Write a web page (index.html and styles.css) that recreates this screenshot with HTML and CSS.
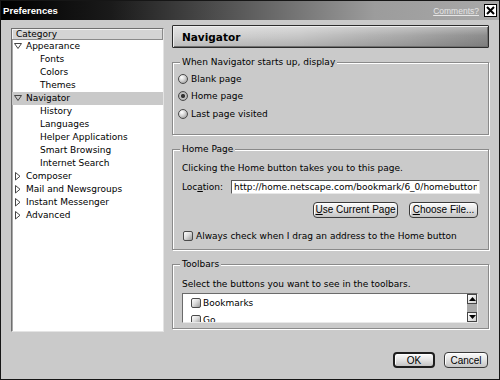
FILE: index.html
```html
<!DOCTYPE html>
<html>
<head>
<meta charset="utf-8">
<title>Preferences</title>
<link rel="stylesheet" href="styles.css">
</head>
<body>
<div class="window">
  <div class="titlebar">
    <span class="title">Preferences</span>
    <span class="comments">Comments?</span>
    <span class="close"><svg width="9" height="9" viewBox="0 0 9 9"><path d="M1 1 L8 8 M8 1 L1 8" stroke="#000" stroke-width="2"/></svg></span>
  </div>
  <div class="main">
    <div class="tree">
      <div class="tree-head">Category</div>
      <div class="row"><svg class="tri" width="9" height="7" viewBox="0 0 9 7"><path d="M0.5 0.5 H7.5 L4 5.5 Z" fill="none" stroke="#444"/></svg>Appearance</div>
      <div class="row child">Fonts</div>
      <div class="row child">Colors</div>
      <div class="row child">Themes</div>
      <div class="row selected"><svg class="tri" width="9" height="7" viewBox="0 0 9 7"><path d="M0.5 0.5 H7.5 L4 5.5 Z" fill="none" stroke="#444"/></svg>Navigator</div>
      <div class="row child">History</div>
      <div class="row child">Languages</div>
      <div class="row child">Helper Applications</div>
      <div class="row child">Smart Browsing</div>
      <div class="row child">Internet Search</div>
      <div class="row"><svg class="tri" width="9" height="9" viewBox="0 0 9 9"><path d="M1.5 0.5 V8 L6 4.25 Z" fill="none" stroke="#444"/></svg>Composer</div>
      <div class="row"><svg class="tri" width="9" height="9" viewBox="0 0 9 9"><path d="M1.5 0.5 V8 L6 4.25 Z" fill="none" stroke="#444"/></svg>Mail and Newsgroups</div>
      <div class="row"><svg class="tri" width="9" height="9" viewBox="0 0 9 9"><path d="M1.5 0.5 V8 L6 4.25 Z" fill="none" stroke="#444"/></svg>Instant Messenger</div>
      <div class="row"><svg class="tri" width="9" height="9" viewBox="0 0 9 9"><path d="M1.5 0.5 V8 L6 4.25 Z" fill="none" stroke="#444"/></svg>Advanced</div>
    </div>
    <div class="panel">
      <div class="panel-head">Navigator</div>
      <fieldset class="group g-start">
        <legend>When Navigator starts up, display</legend>
        <div class="opt"><span class="radio"></span>Blank page</div>
        <div class="opt"><span class="radio on"></span>Home page</div>
        <div class="opt"><span class="radio"></span>Last page visited</div>
      </fieldset>
      <fieldset class="group g-home">
        <legend>Home Page</legend>
        <div class="line">Clicking the Home button takes you to this page.</div>
        <div class="loc">
          <span class="loc-label">Loc<u>a</u>tion:</span>
          <input class="loc-input" type="text" value="http://home.netscape.com/bookmark/6_0/homebutton.html">
        </div>
        <div class="btnrow">
          <button class="btn w-use"><u>U</u>se Current Page</button>
          <button class="btn w-choose"><u>C</u>hoose File...</button>
        </div>
        <div class="check-row"><span class="check"></span>Always check when I drag an address to the Home button</div>
      </fieldset>
      <fieldset class="group g-tool">
        <legend>Toolbars</legend>
        <div class="line">Select the buttons you want to see in the toolbars.</div>
        <div class="listbox">
          <div class="items">
            <div class="item"><span class="check"></span>Bookmarks</div>
            <div class="item"><span class="check"></span>Go</div>
          </div>
          <div class="scroll">
            <div class="sbtn"><svg width="7" height="4" viewBox="0 0 7 4"><path d="M0 4 L3.5 0 L7 4 Z" fill="#000"/></svg></div>
            <div class="thumb"></div>
            <div class="sbtn"><svg width="7" height="4" viewBox="0 0 7 4"><path d="M0 0 L3.5 4 L7 0 Z" fill="#000"/></svg></div>
          </div>
        </div>
      </fieldset>
    </div>
  </div>
  <div class="footer">
    <button class="btn default w-ok">OK</button>
    <button class="btn w-cancel">Cancel</button>
  </div>
</div>
</body>
</html>
```

FILE: styles.css
```css
* { box-sizing: border-box; }
html, body { margin: 0; padding: 0; }
body {
  width: 500px;
  height: 380px;
  background: #cacaca;
  font-family: "DejaVu Sans", Verdana, sans-serif;
  font-size: 9px;
  color: #000;
  overflow: hidden;
}
.window {
  width: 500px;
  height: 380px;
  border: 1px solid #161616;
  background: #cacaca;
  display: flex;
  flex-direction: column;
}
.titlebar {
  flex: none;
  height: 19px;
  display: flex;
  align-items: center;
  padding: 0 2px 0 2px;
  background: linear-gradient(to right, #000 0%, #1a1a1a 22%, #5e5e5e 50%, #9c9c9c 75%, #a8a8a8 100%);
}
.title {
  flex: 1;
  font-family: "Liberation Sans", Arial, sans-serif;
  font-weight: bold;
  font-size: 9.6px;
  color: #fff;
}
.comments {
  font-family: "Liberation Sans", Arial, sans-serif;
  font-size: 8.5px;
  color: #e6e6e6;
  text-decoration: underline;
  margin-right: 5px;
}
.close {
  width: 13px;
  height: 13px;
  background: #fff;
  border: 1px solid #000;
  display: flex;
  align-items: center;
  justify-content: center;
}

.main {
  flex: none;
  height: 312px;
  display: flex;
  align-items: flex-start;
  gap: 8px;
  padding: 5px 10px 0 10px;
}
.tree {
  flex: none;
  width: 153px;
  height: 304px;
  margin-top: 3px;
  background: #fff;
  border-top: 1px solid #6f6f6f;
  border-left: 1px solid #6f6f6f;
  border-right: 1px solid #e4e4e4;
  border-bottom: 1px solid #e4e4e4;
  box-shadow: inset 1px 0 0 #a8a8a8;
}
.tree-head {
  height: 11px;
  line-height: 11px;
  padding-left: 4px;
  background: #d4d4d4;
  border-bottom: 1px solid #8a8a8a;
  border-right: 1px solid #8a8a8a;
  box-shadow: inset 1px 1px 0 #f2f2f2;
}
.row {
  height: 13px;
  line-height: 13px;
  display: flex;
  align-items: center;
  padding-left: 2px;
  white-space: nowrap;
}
.row.child { padding-left: 28px; }
.row.selected { background: #c9c9c9; }
.tri { flex: none; margin-right: 3px; }

.panel {
  flex: none;
  width: 317px;
  display: flex;
  flex-direction: column;
}
.panel-head {
  height: 23px;
  display: flex;
  align-items: center;
  padding-left: 9px;
  font-weight: bold;
  font-size: 10.5px;
  border: 1px solid #2c2c2c;
  border-radius: 1px;
  background:
    linear-gradient(to bottom, rgba(255,255,255,0.35) 0%, rgba(255,255,255,0) 45%, rgba(0,0,0,0.12) 100%),
    linear-gradient(to right, #d6d6d6 0%, #c8c8c8 40%, #a8a8a8 75%, #8c8c8c 100%);
  box-shadow: inset 1px 1px 0 #eeeeee, inset -1px -1px 0 #707070;
}

.group {
  margin: 9px 0 0 0;
  border: 1px solid #8a8a8a;
  box-shadow: inset 1px 1px 0 #fff, 1px 1px 0 #fff;
  min-width: 0;
}
.group legend {
  font-size: 9px;
  line-height: 11px;
  padding: 0 2px;
  background: #cacaca;
}
.g-start { padding: 2px 5px 11px 5px; }
.g-start legend { margin-left: 2px; }
.g-home { padding: 7px 10px 7px 9px; }
.g-home legend, .g-tool legend { margin-left: -2px; }
.g-tool { padding: 8px 10px 5px 9px; }

.opt {
  height: 17.5px;
  display: flex;
  align-items: center;
  gap: 3px;
}
.radio {
  flex: none;
  width: 10px;
  height: 10px;
  border-radius: 50%;
  border: 1px solid #4a4a4a;
  background: radial-gradient(circle at 35% 30%, #ffffff 0%, #d8d8d8 40%, #8c8c8c 100%);
}
.radio.on {
  background: radial-gradient(circle at 50% 50%, #2e2e2e 0, #3a3a3a 1.8px, #c4c4c4 2.4px, #9a9a9a 100%);
}
.line {
  height: 12px;
  line-height: 12px;
  white-space: nowrap;
}
.loc {
  margin-top: 6px;
  display: flex;
  align-items: center;
  height: 14px;
  margin-right: -2px;
}
.loc-label { flex: none; width: 49px; }
.loc-input {
  flex: 1;
  min-width: 0;
  height: 14px;
  margin: 0;
  padding: 0 2px;
  font-family: "DejaVu Sans", Verdana, sans-serif;
  font-size: 9px;
  color: #000;
  background: #fff;
  border-top: 1px solid #555;
  border-left: 1px solid #555;
  border-right: 1px solid #e8e8e8;
  border-bottom: 1px solid #e8e8e8;
  outline: none;
}
.btnrow {
  margin-top: 8px;
  display: flex;
  justify-content: flex-end;
  gap: 11px;
}
.btn {
  height: 16px;
  margin: 0;
  padding: 0;
  font-family: "Liberation Sans Narrow", "Liberation Sans", Arial, sans-serif;
  font-stretch: condensed;
  font-size: 10px;
  color: #000;
  border: 1px solid #3a3a3a;
  border-radius: 4px;
  background: linear-gradient(to bottom, #fbfbfb 0%, #e6e6e6 45%, #c4c4c4 100%);
  box-shadow: inset 1px 1px 0 #fff;
}
.btn.default { border: 2px solid #1e1e1e; }
.w-use { width: 85px; }
.w-choose { width: 69px; }
.w-ok { width: 42px; }
.w-cancel { width: 44px; }
.check-row {
  margin-top: 12px;
  height: 12px;
  display: flex;
  align-items: center;
  gap: 3px;
  white-space: nowrap;
  padding-left: 1px;
}
.check {
  flex: none;
  width: 10px;
  height: 10px;
  border: 1px solid #4a4a4a;
  border-radius: 2px;
  background: linear-gradient(135deg, #ffffff 0%, #dedede 45%, #9a9a9a 100%);
}
.listbox {
  margin-top: 3px;
  height: 30px;
  display: flex;
  background: #fff;
  border-top: 1px solid #6a6a6a;
  border-left: 1px solid #6a6a6a;
  border-right: 1px solid #e8e8e8;
  border-bottom: 1px solid #e8e8e8;
  overflow: hidden;
}
.items {
  flex: 1;
  padding: 1px 0 0 8px;
  overflow: hidden;
}
.item {
  height: 17px;
  display: flex;
  align-items: center;
  gap: 2px;
}
.scroll {
  flex: none;
  width: 10px;
  display: flex;
  flex-direction: column;
}
.sbtn {
  flex: none;
  height: 10px;
  display: flex;
  align-items: center;
  justify-content: center;
  border: 1px solid #444;
  background: linear-gradient(135deg, #fff 0%, #d0d0d0 100%);
}
.thumb { flex: 1; background: #a9a9a9; }

.footer {
  flex: none;
  display: flex;
  justify-content: flex-end;
  gap: 9px;
  padding: 20px 11px 0 0;
}
```
